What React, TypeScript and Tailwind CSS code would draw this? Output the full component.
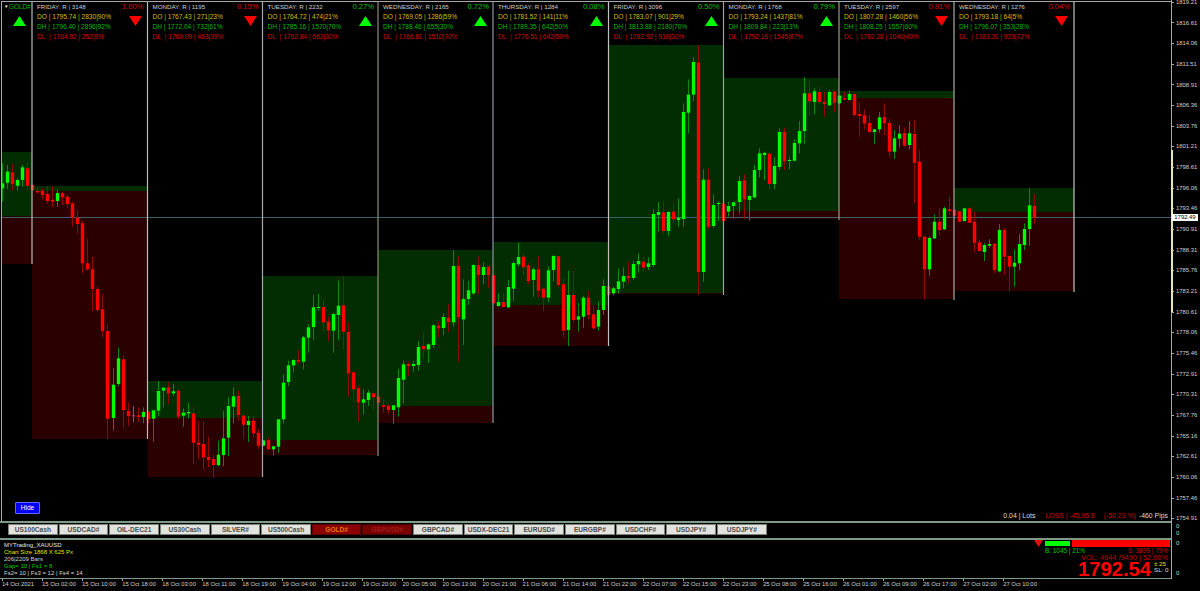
import { Fragment } from "react";

// [kind, wick top, body top, body bottom, wick bottom] kind: 1 up, 0 down, 2 doji
type Bar = [number, number, number, number, number];

const segA: Bar[] = [
  [1,40,100,115,155],[1,45,65,98,118],[0,43,67,102,122],[1,85,90,107,122],[1,45,52,90,110],[0,38,55,107,120],
  [0,103,105,120,122],[0,112,123,127,130],[0,115,122,135,148],[0,108,132,153,160],[0,108,150,155,172],[1,118,129,153,170],
  [0,125,130,142,165],[0,135,140,162,175],[0,155,160,203,230],[0,180,203,222,250],[0,212,220,340,370],[0,265,340,358,362],
  [0,320,358,417,483],[0,410,417,480,485],[0,432,478,543,562],[0,522,543,806,868],[1,655,704,804,842],[1,592,625,702,710],
  [0,618,628,780,835],[0,758,783,798,828],[2,768,796,798,816],[0,772,796,801,816],[1,772,786,801,820],[0,783,785,807,820],
  [1,780,781,806,875],[1,693,723,782,798],[1,712,713,722,772],[0,697,712,730,762],[1,702,724,730,738],[0,720,722,800,808],
  [1,775,788,797,830],[1,758,786,790,805],[0,772,790,878,943],[0,813,878,885,925],[0,815,882,922,960],[0,860,921,930,952],
  [0,915,927,945,983],[1,872,914,945,950],[1,783,865,915,948],[1,742,768,863,918],[1,712,739,770,820],[0,722,738,795,812],
  [0,795,797,824,868],[1,798,813,825,876],[0,798,812,850,862],[0,838,848,887,897],[1,870,871,887,888],[0,862,870,897,900],
  [1,888,889,898,917],[1,807,808,890,908],[1,673,698,808,820],[1,632,646,696,708],[1,628,630,646,667],[0,603,630,635,642],
];

const segB: Bar[] = [
  [1,318,322,395,418],[1,282,292,323,368],[1,195,232,291,330],[1,192,231,233,242],[0,208,231,277,305],[0,260,274,301,333],
  [1,248,252,302,368],[1,152,227,255,330],[0,140,226,305,357],[0,277,306,430,500],[0,425,427,478,515],[0,468,475,517,575],
  [1,478,508,518,553],[1,480,488,510,528],[0,488,490,502,538],[0,498,500,518,520],[0,508,525,530,548],[0,522,528,540,550],
  [1,525,526,540,582],[1,418,444,532,560],[1,392,403,449,520],[0,394,402,408,438],[1,393,402,408,426],[1,334,351,405,422],
  [0,308,348,358,384],[1,340,343,358,398],[1,282,286,345,354],[0,274,287,295,322],[1,250,261,294,315],[0,222,263,276,306],
  [1,60,108,277,290],[0,80,108,262,394],[1,148,207,268,345],[1,153,181,207,225],[1,103,105,190,195],[0,80,106,135,193],
  [1,96,111,135,162],[0,108,110,135,172],[0,135,136,220,222],[1,190,216,228,230],[0,190,216,231,232],[1,150,171,232,235],
  [1,95,99,176,212],[1,38,81,103,110],[0,70,80,112,135],[0,100,106,153,162],[1,112,118,150,200],[0,78,118,182,203],
  [0,172,176,203,243],[1,110,121,203,217],[1,75,78,120,153],[0,78,79,165,170],[0,145,163,302,322],[1,122,195,300,348],
  [0,123,195,270,278],[1,220,259,269,305],[1,197,203,260,293],[0,183,203,255,268],[0,225,253,295,298],[1,215,240,290,302],
  [1,148,168,240,255],[0,168,169,195,196],[1,170,175,190,195],[1,115,154,177,190],
];

const segC: Bar[] = [
  [1,682,708,725,745],[0,665,708,714,730],[1,662,672,714,720],[1,640,663,673,697],[0,650,665,683,695],[1,652,670,681,690],
  [1,508,522,675,682],[1,487,516,525,575],[0,483,517,573,580],[1,512,516,573,587],[0,492,515,538,548],[1,475,533,540,560],
  [1,190,216,537,560],[1,118,164,218,280],[1,52,66,164,183],[0,15,68,696,765],[1,388,419,696,725],[0,385,419,560,567],
  [1,463,495,558,563],[1,484,489,492,543],[0,490,491,543,544],[1,485,498,515,530],[1,485,487,498,535],[1,408,423,486,520],
  [0,403,421,478,537],[1,465,468,480,542],[1,375,390,472,475],[1,325,340,390,412],[1,335,339,345,420],[0,340,341,432,450],
  [1,352,378,432,448],[1,265,276,381,390],[0,263,276,364,390],[1,350,360,362,388],[1,298,309,362,364],[1,243,273,310,340],
  [1,112,160,273,312],[0,120,160,184,228],[1,145,154,186,223],[0,142,156,186,192],[0,155,186,192,230],[1,150,156,196,198],
  [0,152,155,188,215],[1,166,167,190,192],[0,155,175,179,180],[1,152,162,180,182],[0,160,162,225,228],[0,188,222,228,290],
  [0,208,226,250,268],[0,225,249,276,277],[1,266,268,276,312],[1,216,232,268,278],[0,190,231,250,286],[0,238,249,335,350],
  [1,270,295,335,357],[1,255,281,296,322],
];

const segD: Bar[] = [
  [0,143,159,197,200],[1,123,160,195,208],[0,120,162,248,368],[0,210,245,470,480],[0,470,470,568,660],[1,470,474,568,587],
  [1,403,425,475,477],[0,385,425,450,467],[1,380,385,448,450],[0,350,388,393,405],[0,388,390,407,408],[0,392,394,425,428],
  [1,384,385,423,425],[0,380,385,428,430],[0,395,425,488,515],[0,478,487,513,515],[1,490,495,516,543],[1,478,492,497,503],
  [0,490,491,570,580],[1,432,450,574,577],[0,445,450,530,583],[0,528,528,560,635],[1,508,548,560,620],[1,462,492,550,570],
  [1,430,447,495,510],[1,325,376,447,497],[0,342,378,413,432],
];

const segments: { y0: number; bars: Bar[] }[] = [
  { y0: 150, bars: segA },
  { y0: 230, bars: segB },
  { y0: 40, bars: segC },
  { y0: 80, bars: segD },
];

const zones = [
  { x1: 2, x2: 32, top: 152, open: 216, low: 264 },
  { x1: 32, x2: 147.5, top: 186, open: 191, low: 439 },
  { x1: 147.5, x2: 262.5, top: 381, open: 418, low: 477 },
  { x1: 262.5, x2: 378, top: 276, open: 440, low: 455 },
  { x1: 378, x2: 493, top: 250, open: 406, low: 423 },
  { x1: 493, x2: 608.5, top: 242, open: 305, low: 346 },
  { x1: 608.5, x2: 723.5, top: 45, open: 293, low: 294 },
  { x1: 723.5, x2: 839, top: 78, open: 211, low: 219 },
  { x1: 839, x2: 954, top: 91, open: 98, low: 299 },
  { x1: 954, x2: 1074, top: 188, open: 212, low: 291 },
];

const dayLines = [
  { x: 32, end: 264, color: "#b8b8b8" },
  { x: 147.5, end: 439, color: "#bcbcbc" },
  { x: 262.5, end: 477, color: "#a8a8b0" },
  { x: 378, end: 456, color: "#8c8c78" },
  { x: 493, end: 423, color: "#8e94a4" },
  { x: 608.5, end: 346, color: "#c0c0c0" },
  { x: 723.5, end: 295, color: "#a898a8" },
  { x: 839, end: 220, color: "#9c9c84" },
  { x: 954, end: 300, color: "#a4aca4" },
  { x: 1074, end: 292, color: "#c4c4c4" },
];

const days = [
  { name: "FRIDAY: R | 3148", pct: "1.60%", up: false, w: "w-[115.5px]", o: "1795.74 | 2830|90%", h: "1796.40 | 2896|92%", l: "1764.92 | 252|8%" },
  { name: "MONDAY: R | 1195", pct: "0.15%", up: false, w: "w-[115px]", o: "1767.43 | 271|23%", h: "1772.04 | 732|61%", l: "1760.09 | 463|39%" },
  { name: "TUESDAY: R | 2232", pct: "0.27%", up: true, w: "w-[115.5px]", o: "1764.72 | 474|21%", h: "1785.16 | 1570|70%", l: "1762.84 | 662|30%" },
  { name: "WEDNESDAY: R | 2165", pct: "0.72%", up: true, w: "w-[115px]", o: "1769.05 | 1286|59%", h: "1788.46 | 655|30%", l: "1766.81 | 1510|70%" },
  { name: "THURSDAY: R | 1284", pct: "0.08%", up: true, w: "w-[115.5px]", o: "1781.52 | 141|11%", h: "1789.35 | 642|50%", l: "1776.51 | 642|50%" },
  { name: "FRIDAY: R | 3096", pct: "0.50%", up: true, w: "w-[115px]", o: "1783.07 | 901|29%", h: "1813.88 | 2180|70%", l: "1782.92 | 916|30%" },
  { name: "MONDAY: R | 1768", pct: "0.79%", up: true, w: "w-[115.5px]", o: "1793.24 | 1437|81%", h: "1809.84 | 223|13%", l: "1792.16 | 1545|87%" },
  { name: "TUESDAY: R | 2597", pct: "0.81%", up: false, w: "w-[115px]", o: "1807.28 | 1460|56%", h: "1808.25 | 1557|60%", l: "1782.28 | 1040|40%" },
  { name: "WEDNESDAY: R | 1276", pct: "0.04%", up: false, w: "w-[120px]", o: "1793.18 | 64|5%", h: "1796.07 | 353|28%", l: "1783.31 | 923|72%" },
];

const prices = [
  "1819.21", "1816.61", "1814.06", "1811.51", "1808.91", "1806.36", "1803.76", "1801.21", "1798.61", "1796.06", "1793.46", "1790.91", "1788.31",
  "1785.76", "1783.21", "1780.61", "1778.06", "1775.46", "1772.91", "1770.31", "1767.76", "1765.16", "1762.61", "1760.06", "1757.46", "1754.91",
];

const times = [
  "14 Oct 2021", "15 Oct 02:00", "15 Oct 10:00", "15 Oct 18:00", "18 Oct 03:00", "18 Oct 11:00", "18 Oct 19:00", "19 Oct 04:00", "19 Oct 12:00",
  "19 Oct 20:00", "20 Oct 05:00", "20 Oct 13:00", "20 Oct 21:00", "21 Oct 06:00", "21 Oct 14:00", "21 Oct 22:00", "22 Oct 07:00", "22 Oct 15:00",
  "22 Oct 23:00", "25 Oct 08:00", "25 Oct 16:00", "26 Oct 01:00", "26 Oct 09:00", "26 Oct 17:00", "27 Oct 02:00", "27 Oct 10:00",
];

const symbols = [
  "US100Cash", "USDCAD#", "OIL-DEC21", "US30Cash", "SILVER#", "US500Cash", "GOLD#", "GBPUSD#", "GBPCAD#", "USDX-DEC21", "EURUSD#", "EURGBP#", "USDCHF#", "USDJPY#", "USDJPY#",
];

function Arrow({ up }: { up: boolean }) {
  return (
    <svg width="13" height="10" viewBox="0 0 13 10" className="block">
      {up ? <polygon points="6.5,0 13,10 0,10" fill="#00ff00" /> : <polygon points="0,0 13,0 6.5,10" fill="#ff0000" />}
    </svg>
  );
}

function Candles() {
  let k = 0;
  return (
    <>
      {segments.map((seg) =>
        seg.bars.map((b) => {
          const x = Math.round(2.33 + 5.008 * k++);
          const [kind, hi, top, bot, lo] = b;
          const wick = kind === 1 ? "#0a8a0a" : kind === 0 ? "#8f0a00" : "#a040a0";
          const body = kind === 1 ? "#00ff00" : kind === 0 ? "#ff0000" : "#a040a0";
          const y = (v: number) => seg.y0 + v / 3;
          return (
            <Fragment key={k}>
              <rect x={x} y={y(hi)} width="1" height={(lo - hi) / 3} fill={wick} />
              <rect x={x - 1.2} y={y(top)} width="3.4" height={Math.max((bot - top) / 3, 1)} fill={body} />
            </Fragment>
          );
        })
      )}
    </>
  );
}

function ChartCanvas() {
  return (
    <svg className="absolute left-0 top-0" width="1169" height="519" viewBox="2 2 1169 519">
      {zones.map((z) => (
        <Fragment key={z.x1}>
          <rect x={z.x1} y={z.top} width={z.x2 - z.x1} height={z.open - z.top} fill="#022d02" />
          <rect x={z.x1} y={z.open} width={z.x2 - z.x1} height={z.low - z.open} fill="#2b0000" />
        </Fragment>
      ))}
      <rect x="2" y="217" width="1169" height="1" fill="#3d5f66" />
      <Candles />
      {dayLines.map((l) => (
        <rect key={l.x} x={l.x - 0.6} y="2" width="1.2" height={l.end - 2} fill={l.color} />
      ))}
    </svg>
  );
}

function DayHeader({ d }: { d: (typeof days)[number] }) {
  return (
    <div className={`${d.w} flex shrink-0 justify-between pl-[5px] pr-[4px]`}>
      <div className="whitespace-nowrap text-[6.6px] leading-[10px]">
        <div className="text-[6.2px] text-[#d0d0d0]">{d.name}</div>
        <div className="text-[#d8bc00]">DO | {d.o}</div>
        <div className="text-[#00b800]">DH | {d.h}</div>
        <div className="text-[#d80000]">DL&nbsp; | {d.l}</div>
      </div>
      <div className="flex flex-col items-end">
        <div className={`text-[7.6px] leading-[10px] ${d.up ? "text-[#00c000]" : "text-[#d80000]"}`}>{d.pct}</div>
        <div className="mr-[2px] mt-[4px]">
          <Arrow up={d.up} />
        </div>
      </div>
    </div>
  );
}

function SymbolButton({ name }: { name: string }) {
  const cls =
    name === "GOLD#"
      ? "bg-[#8b0000] text-[#e87800] border-[#5a0000]"
      : name === "GBPUSD#"
        ? "bg-[#760000] text-[#a41c1c] border-[#4a0000]"
        : "bg-[#e2e2de] text-[#4c4c4c] border-[#7c8478]";
  return (
    <div className={`flex h-[11px] w-[49.65px] shrink-0 items-center justify-center border text-[6.6px] font-bold ${cls}`}>{name}</div>
  );
}

export default function App() {
  return (
    <div className="flex h-[591px] w-[1200px] flex-col overflow-hidden bg-black font-['Liberation_Sans',Arial,sans-serif] text-[#b0b0b0]">
      <div className="flex h-[579px] shrink-0">
        <div className="flex w-[1171px] shrink-0 flex-col">
          {/* main chart */}
          <div className="relative ml-px mt-px h-[520px] shrink-0 border-l border-t border-[#a8a8a8]">
            <ChartCanvas />
            <div className="absolute left-0 top-0 flex">
              <div className="flex w-[30px] shrink-0 flex-col">
                <div className="flex h-[10px] items-center gap-[1px] pl-[3px] text-[6.4px]">
                  <span className="text-[5px] text-white">▾</span>
                  <span className="text-[#00b800]">GOLD#</span>
                </div>
                <div className="ml-[11px] mt-[4px]">
                  <Arrow up />
                </div>
              </div>
              {days.map((d, i) => (
                <DayHeader key={i} d={d} />
              ))}
            </div>
            <button className="absolute left-[13px] top-[500px] flex h-[12px] w-[25px] items-center justify-center rounded-[1px] border border-[#5a6cff] bg-[#0000f0] text-[6.6px] text-white">
              Hide
            </button>
            <div className="absolute bottom-[1px] right-[3px] flex whitespace-nowrap text-[6.9px] leading-[8px] text-[#dcdcdc]">
              <span>0.04 | Lots</span>
              <span className="ml-[10px] text-[#c80000]">LOSS | -45.95 $</span>
              <span className="ml-[9px] text-[#c80000]">(-50.23 %)</span>
              <span className="ml-[3px]">-460 Pips</span>
            </div>
          </div>

          <div className="h-[2px] shrink-0 bg-[#7d9a85]" />

          {/* symbol buttons */}
          <div className="flex h-[15px] shrink-0 gap-[1px] pl-[8px] pt-px">
            {symbols.map((s, i) => (
              <SymbolButton key={i} name={s} />
            ))}
          </div>

          <div className="h-[2px] shrink-0 bg-[#7d9a85]" />

          {/* info panel */}
          <div className="flex h-[38px] shrink-0 justify-between">
            <div className="whitespace-nowrap pl-[4px] pt-[1.5px] text-[6px] leading-[7.2px]">
              <div className="text-[#e8e8e8]">MYTrading_XAUUSD</div>
              <div className="text-[#e0e000]">Chart Size 1868 X 625 Px</div>
              <div className="text-[#d0d0d0]">206|2209 Bars</div>
              <div className="text-[#00c800]">Gap= 10 | Fs1 = 8</div>
              <div className="text-[#d8d8d8]">Fs2= 10 | Fs3 = 12 | Fs4 = 14</div>
            </div>
            <div className="flex w-[137px] flex-col pr-[1px]">
              <div className="flex h-[7.5px] shrink-0 items-start">
                <svg width="9" height="7" viewBox="0 0 9 7" className="block shrink-0">
                  <polygon points="0,0 9,0 4.5,7" fill="#e01010" />
                </svg>
                <div className="ml-[1px] h-[7px] w-[27px] shrink-0 border border-black bg-[#00ff00]" />
                <div className="ml-[1px] h-[6.5px] flex-1 bg-[#ff0000]" />
              </div>
              <div className="flex h-[6.5px] shrink-0 items-center justify-between pl-[11px] pr-[2px] text-[6.4px]">
                <span className="text-[#00c800]">B: 1045 | 21%</span>
                <span className="text-[#d80000]">S: 3899 | 79%</span>
              </div>
              <div className="flex h-[7px] shrink-0 items-center justify-end pr-[2px] text-[7.4px] text-[#c00000]">VOL: 4944 /9490 | 52.00%</div>
              <div className="flex justify-end pr-[2px]">
                <div className="text-[20.2px] font-bold leading-[16px] text-[#ff0000]">1792.54</div>
                <div className="ml-[3px] w-[14px] whitespace-nowrap text-[6.2px] leading-[6.3px]">
                  <div className="text-[#e0e000]">± 25</div>
                  <div className="text-[#dcdcdc]">SL: 0</div>
                </div>
              </div>
            </div>
          </div>

          <div className="h-px shrink-0 bg-[#7d9a85]" />
        </div>

        {/* price axis */}
        <div className="relative flex w-[29px] shrink-0 flex-col border-l border-[#a8a8a8] text-[5.9px] text-[#d0d0d0]">
          <div className="h-[523px] shrink-0">
            <div className="-mt-[8px]">
              {prices.map((p) => (
                <div key={p} className="flex h-[20.67px] items-center">
                  <div className="h-px w-[2px] bg-[#a8a8a8]" />
                  <span className="ml-[2px]">{p}</span>
                </div>
              ))}
            </div>
          </div>
          <div className="h-[15px] shrink-0 pl-[4px] text-[6px] leading-[7px]">
            <div>0</div>
            <div>0</div>
          </div>
          <div className="flex h-[41px] flex-col justify-between pb-[2px] pl-[4px] pt-[2px] text-[6px] leading-[7px]">
            <div>0</div>
            <div>0</div>
          </div>
          <div className="absolute -left-[1px] top-[150px] h-[162px] w-[2px] bg-[#e6e6b0]" />
          <div className="absolute left-0 top-[214px] flex h-[7px] w-[26px] items-center justify-center bg-white text-[5.9px] text-black">1792.49</div>
        </div>
      </div>

      {/* time axis */}
      <div className="flex pl-[2px]">
        {times.map((t) => (
          <div key={t} className="w-[40.05px] shrink-0 whitespace-nowrap text-[5.9px] leading-[6px] text-[#d0d0d0]">
            <div className="h-[2px] w-px bg-[#a8a8a8]" />
            {t}
          </div>
        ))}
      </div>
    </div>
  );
}
